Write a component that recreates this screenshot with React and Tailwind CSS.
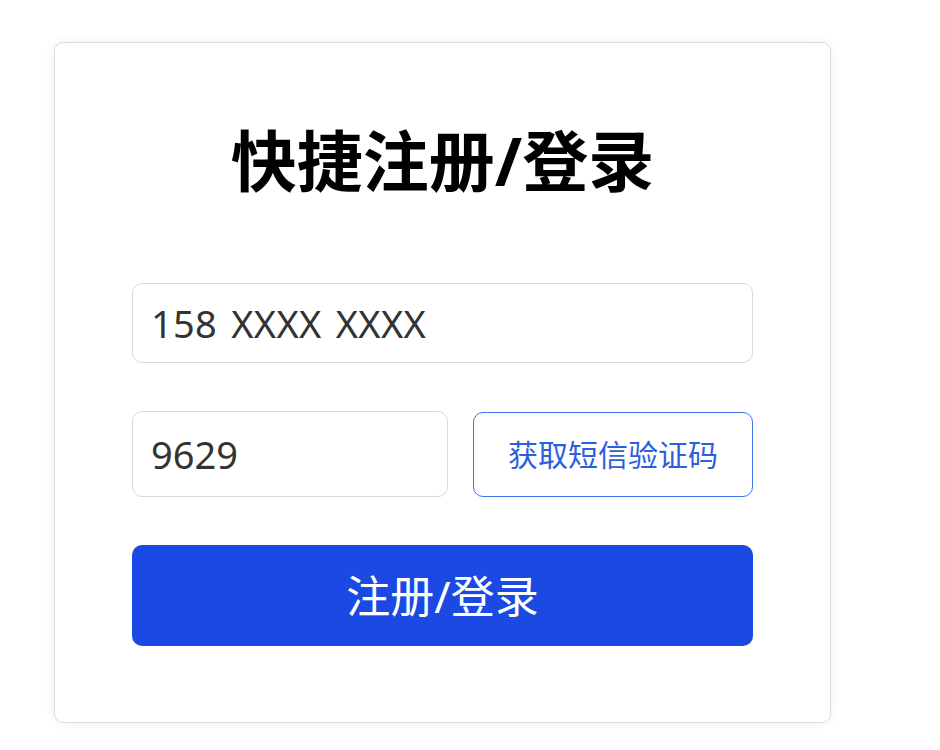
import { useState } from 'react'

const font = { fontFamily: '"Noto Sans", "Noto Sans CJK SC", sans-serif' }

export default function App() {
  const [phone, setPhone] = useState('158 XXXX XXXX')
  const [code, setCode] = useState('9629')

  return (
    <div className="min-h-screen bg-white" style={font}>
      <div className="pl-[54px] pt-[42px]">
        <div className="flex w-[777px] h-[681px] flex-col rounded-[9px] border border-[#dcdcdc] bg-white px-[77px] pt-[84px] shadow-[0_0_12px_rgba(0,0,0,0.06)]">
          <h1 className="text-center text-[66px] font-bold leading-none text-black">快捷注册/登录</h1>

          <input
            value={phone}
            onChange={(e) => setPhone(e.target.value)}
            className="mt-[90px] h-[80px] w-full rounded-[10px] border border-[#d9d9d9] px-[18px] text-[38px] text-[#333] outline-none [word-spacing:4px] tracking-[0.3px]"
          />

          <div className="mt-[48px] flex items-center justify-between">
            <input
              value={code}
              onChange={(e) => setCode(e.target.value)}
              className="h-[86px] w-[316px] rounded-[10px] border border-[#d9d9d9] px-[18px] text-[38px] text-[#333] outline-none"
            />
            <button className="h-[85px] w-[280px] rounded-[10px] border border-[#3d73ee] bg-white text-[30px] text-[#2d5edc]">
              获取短信验证码
            </button>
          </div>

          <button className="mt-[48px] h-[101px] w-full rounded-[10px] bg-[#1a4ae3] text-[44px] text-white">
            注册/登录
          </button>
        </div>
      </div>
    </div>
  )
}
